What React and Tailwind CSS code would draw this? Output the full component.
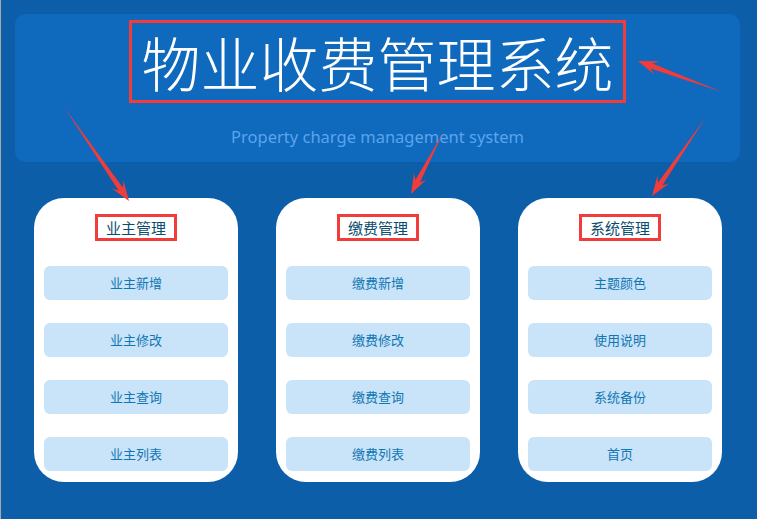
const groups = [
  { title: "业主管理", items: ["业主新增", "业主修改", "业主查询", "业主列表"] },
  { title: "缴费管理", items: ["缴费新增", "缴费修改", "缴费查询", "缴费列表"] },
  { title: "系统管理", items: ["主题颜色", "使用说明", "系统备份", "首页"] },
];

// tail -> tip, red pointer arrows drawn over the page
const arrows = [
  [63, 107, 128, 201],
  [442, 133, 410, 194],
  [721, 92, 637, 61],
  [705, 117, 651, 196],
];

function arrowPoints([x1, y1, x2, y2]) {
  const dx = x2 - x1;
  const dy = y2 - y1;
  const len = Math.hypot(dx, dy);
  const ux = dx / len;
  const uy = dy / len;
  const nx = -uy;
  const ny = ux;
  const head = 20;
  const neck = head * 0.72;
  const pts = [
    [x1, y1],
    [x2 - ux * neck + nx * 2.6, y2 - uy * neck + ny * 2.6],
    [x2 - ux * head + nx * 7, y2 - uy * head + ny * 7],
    [x2, y2],
    [x2 - ux * head - nx * 7, y2 - uy * head - ny * 7],
    [x2 - ux * neck - nx * 2.6, y2 - uy * neck - ny * 2.6],
  ];
  return pts.map((p) => p.join(",")).join(" ");
}

const Card = ({ title, items }) => (
  <div className="w-[204px] h-[284px] bg-white rounded-[30px] flex flex-col items-center pt-[16px] px-[10px]">
    <div className="border-[3px] border-[#f23b3b] px-[8px] text-[15px] leading-[21px] text-[#0b4d6e]">
      {title}
    </div>
    <div className="w-full mt-[25px] flex flex-col gap-[23px]">
      {items.map((item) => (
        <button
          key={item}
          className="w-full h-[34px] rounded-[6px] bg-[#c9e3f9] text-[13px] text-[#1077b3]"
        >
          {item}
        </button>
      ))}
    </div>
  </div>
);

export default function App() {
  return (
    <div
      className="relative w-full h-[519px] bg-[#0c5ea8] border-l border-[#a9a9a9] overflow-hidden"
      style={{ fontFamily: '"Microsoft YaHei", "Noto Sans CJK SC", "Noto Sans", sans-serif' }}
    >
      <div className="pt-[14px] pl-[14px] pr-[17px]">
        <div className="h-[148px] rounded-[10px] bg-[#0f69bd] flex flex-col items-center pt-[6px]">
          <h1 className="border-[3px] border-[#f23b3b] px-[9px] text-[59px] leading-[77px] font-light text-white">
            物业收费管理系统
          </h1>
          <p
            className="mt-[22px] text-[16.5px] leading-[24px] text-[#5aa5ee]"
            style={{ fontFamily: '"Noto Sans", "Open Sans", sans-serif' }}
          >
            Property charge management system
          </p>
        </div>
      </div>

      <div className="mt-[36px] pl-[33px] flex gap-[38px]">
        {groups.map((g) => (
          <Card key={g.title} title={g.title} items={g.items} />
        ))}
      </div>

      <svg className="absolute inset-0 pointer-events-none" width="757" height="519">
        {arrows.map((a, i) => (
          <polygon key={i} points={arrowPoints(a)} fill="#f23b3b" />
        ))}
      </svg>
    </div>
  );
}
